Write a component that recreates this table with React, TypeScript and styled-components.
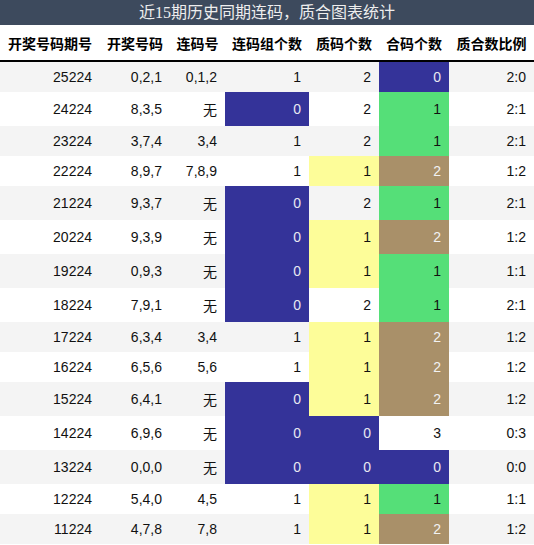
import styled, { createGlobalStyle } from 'styled-components';

const GlobalStyle = createGlobalStyle`
    html, body {
        margin: 0;
        padding: 0;
        background: #fff;
    }
`;

type Tone = 'blue' | 'green' | 'yellow' | 'tan' | 'none';

const toneBg: Record<Tone, string> = {
    blue: '#343399',
    green: '#55df78',
    yellow: '#fdfd99',
    tan: '#a99069',
    none: 'transparent',
};

const toneText: Record<Tone, string> = {
    blue: '#e8e8f0',
    green: '#111',
    yellow: '#111',
    tan: '#f2f2f2',
    none: '#111',
};

const Wrapper = styled.div`
    width: 534px;
    font-family: "Liberation Sans", "Noto Sans CJK SC", sans-serif;
`;

const Title = styled.div`
    height: 25px;
    background: #3d4a5d;
    color: #eeeeee;
    font-family: "Liberation Serif", "Noto Sans CJK SC", serif;
    font-size: 16px;
    line-height: 25px;
    text-align: center;
    white-space: nowrap;
`;

const Table = styled.table`
    width: 534px;
    border-collapse: collapse;
    table-layout: fixed;
    font-size: 14px;
`;

const HeadCell = styled.th`
    padding: 8px 0 7px;
    font-weight: bold;
    text-align: center;
    color: #000;
    border-bottom: 2px solid #000;
    white-space: nowrap;
`;

const Row = styled.tr<{ $striped: boolean }>`
    background: ${(p) => (p.$striped ? '#f4f4f4' : '#fff')};
`;

const Cell = styled.td<{ $tone?: Tone }>`
    padding: 7px 8px 7px 0;
    text-align: right;
    white-space: nowrap;
    background: ${(p) => toneBg[p.$tone ?? 'none']};
    color: ${(p) => toneText[p.$tone ?? 'none']};
`;

const columns = [
    { label: '开奖号码期号', width: 100 },
    { label: '开奖号码', width: 70 },
    { label: '连码号', width: 55 },
    { label: '连码组个数', width: 84 },
    { label: '质码个数', width: 70 },
    { label: '合码个数', width: 70 },
    { label: '质合数比例', width: 85 },
];

const data: [string, string, string, number, number, number, string][] = [
    ['25224', '0,2,1', '0,1,2', 1, 2, 0, '2:0'],
    ['24224', '8,3,5', '无', 0, 2, 1, '2:1'],
    ['23224', '3,7,4', '3,4', 1, 2, 1, '2:1'],
    ['22224', '8,9,7', '7,8,9', 1, 1, 2, '1:2'],
    ['21224', '9,3,7', '无', 0, 2, 1, '2:1'],
    ['20224', '9,3,9', '无', 0, 1, 2, '1:2'],
    ['19224', '0,9,3', '无', 0, 1, 1, '1:1'],
    ['18224', '7,9,1', '无', 0, 2, 1, '2:1'],
    ['17224', '6,3,4', '3,4', 1, 1, 2, '1:2'],
    ['16224', '6,5,6', '5,6', 1, 1, 2, '1:2'],
    ['15224', '6,4,1', '无', 0, 1, 2, '1:2'],
    ['14224', '6,9,6', '无', 0, 0, 3, '0:3'],
    ['13224', '0,0,0', '无', 0, 0, 0, '0:0'],
    ['12224', '5,4,0', '4,5', 1, 1, 1, '1:1'],
    ['11224', '4,7,8', '7,8', 1, 1, 2, '1:2'],
];

// colour rules per column
const linkTone = (n: number): Tone => (n === 0 ? 'blue' : 'none');
const primeTone = (n: number): Tone => (n === 0 ? 'blue' : n === 1 ? 'yellow' : 'none');
const compTone = (n: number): Tone =>
    n === 0 ? 'blue' : n === 1 ? 'green' : n === 2 ? 'tan' : 'none';

const App = () => {
    return (
        <Wrapper>
            <GlobalStyle />
            <Title>近15期历史同期连码，质合图表统计</Title>
            <Table>
                <colgroup>
                    {columns.map((c) => (
                        <col key={c.label} style={{ width: c.width }} />
                    ))}
                </colgroup>
                <thead>
                    <tr>
                        {columns.map((c) => (
                            <HeadCell key={c.label}>{c.label}</HeadCell>
                        ))}
                    </tr>
                </thead>
                <tbody>
                    {data.map((r, i) => (
                        <Row key={r[0]} $striped={i % 2 === 0}>
                            <Cell>{r[0]}</Cell>
                            <Cell>{r[1]}</Cell>
                            <Cell>{r[2]}</Cell>
                            <Cell $tone={linkTone(r[3])}>{r[3]}</Cell>
                            <Cell $tone={primeTone(r[4])}>{r[4]}</Cell>
                            <Cell $tone={compTone(r[5])}>{r[5]}</Cell>
                            <Cell>{r[6]}</Cell>
                        </Row>
                    ))}
                </tbody>
            </Table>
        </Wrapper>
    );
};

export default App;
